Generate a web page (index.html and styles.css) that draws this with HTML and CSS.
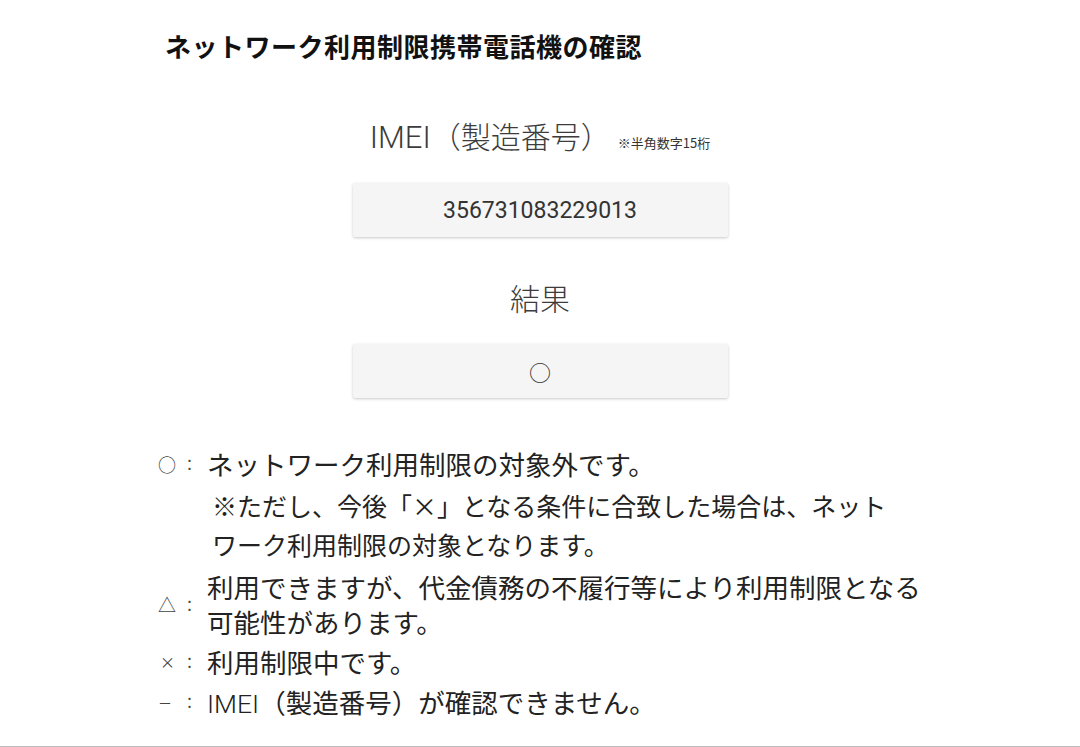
FILE: index.html
```html
<!DOCTYPE html>
<html lang="ja">
<head>
<meta charset="utf-8">
<title>ネットワーク利用制限携帯電話機の確認</title>
<link rel="stylesheet" href="styles.css">
</head>
<body>
<div class="page">
  <h1 class="title">ネットワーク利用制限携帯電話機の確認</h1>
  <section class="check">
    <h2 class="label"><span class="latin">IMEI</span>（製造番号）<span class="hint">※半角数字15桁</span></h2>
    <div class="field field-num">356731083229013</div>
    <h2 class="label label-result">結果</h2>
    <div class="field field-result">○</div>
  </section>
  <dl class="legend">
    <dt class="sym"><span class="mark">○</span><span class="colon">：</span></dt>
    <dd class="desc">
      <div class="main">ネットワーク利用制限の対象外です。</div>
      <p class="note">※ただし、今後「×」となる条件に合致した場合は、ネットワーク利用制限の対象となります。</p>
    </dd>
    <dt class="sym sym-mid"><span class="mark">△</span><span class="colon">：</span></dt>
    <dd class="desc">利用できますが、代金債務の不履行等により利用制限となる可能性があります。</dd>
    <dt class="sym"><span class="mark mark-x">×</span><span class="colon">：</span></dt>
    <dd class="desc">利用制限中です。</dd>
    <dt class="sym"><span class="mark mark-dash">－</span><span class="colon">：</span></dt>
    <dd class="desc"><span class="latin-body">IMEI</span>（製造番号）が確認できません。</dd>
  </dl>
</div>
</body>
</html>
```

FILE: styles.css
```css
html, body {
  margin: 0;
  padding: 0;
  background: #ffffff;
}

body {
  font-family: "Noto Sans CJK JP", "Noto Sans", sans-serif;
  color: #222222;
}

.page {
  width: 1080px;
  height: 746px;
  border-bottom: 1px solid #bdbdbd;
  overflow: hidden;
}

.title {
  margin: 0;
  padding: 28px 0 0 165px;
  font-size: 26px;
  line-height: 36px;
  font-weight: 700;
  letter-spacing: 0.5px;
  color: #111111;
}

.check {
  display: flex;
  flex-direction: column;
  align-items: center;
}

.label {
  margin: 53px 0 0 0;
  height: 36px;
  display: flex;
  align-items: baseline;
  font-size: 30px;
  line-height: 36px;
  font-weight: 300;
  color: #3c3c3c;
}

.latin {
  font-family: Roboto, "Noto Sans CJK JP", sans-serif;
  font-weight: 300;
  font-size: 31px;
}

.hint {
  font-size: 13px;
  line-height: 13px;
  margin-left: 7px;
  font-weight: 400;
  color: #333333;
}

.label-result {
  margin-top: 42px;
}

.field {
  margin-top: 30px;
  width: 375px;
  height: 54px;
  background: #f5f5f5;
  box-shadow: 0 1px 3px rgba(0, 0, 0, 0.22);
  border-radius: 2px;
  display: flex;
  align-items: center;
  justify-content: center;
  color: #333333;
}

.field-num {
  font-family: Roboto, "Noto Sans CJK JP", sans-serif;
  font-size: 23px;
  font-weight: 400;
}

.field-result {
  margin-top: 29px;
  font-size: 22px;
}

.legend {
  margin: 48px 0 0 158px;
  display: grid;
  grid-template-columns: 49px 730px;
  row-gap: 5px;
}

.sym {
  display: flex;
  align-items: center;
  height: 35px;
  font-size: 18px;
  color: #444444;
}

.sym-mid {
  align-self: center;
}

.mark {
  width: 24px;
}

.mark-x {
  font-size: 15px;
  padding-left: 2px;
  width: 22px;
}

.mark-dash {
  font-size: 14px;
}

.colon {
  font-size: 15px;
  width: 14px;
  text-align: center;
}

.desc {
  margin: 0;
  font-size: 26.5px;
  line-height: 35px;
  color: #222222;
}

.latin-body {
  font-family: Roboto, "Noto Sans CJK JP", sans-serif;
  font-weight: 300;
}

.note {
  margin: 5px 0 0 5px;
  width: 690px;
  font-size: 25px;
  line-height: 39px;
}
```
